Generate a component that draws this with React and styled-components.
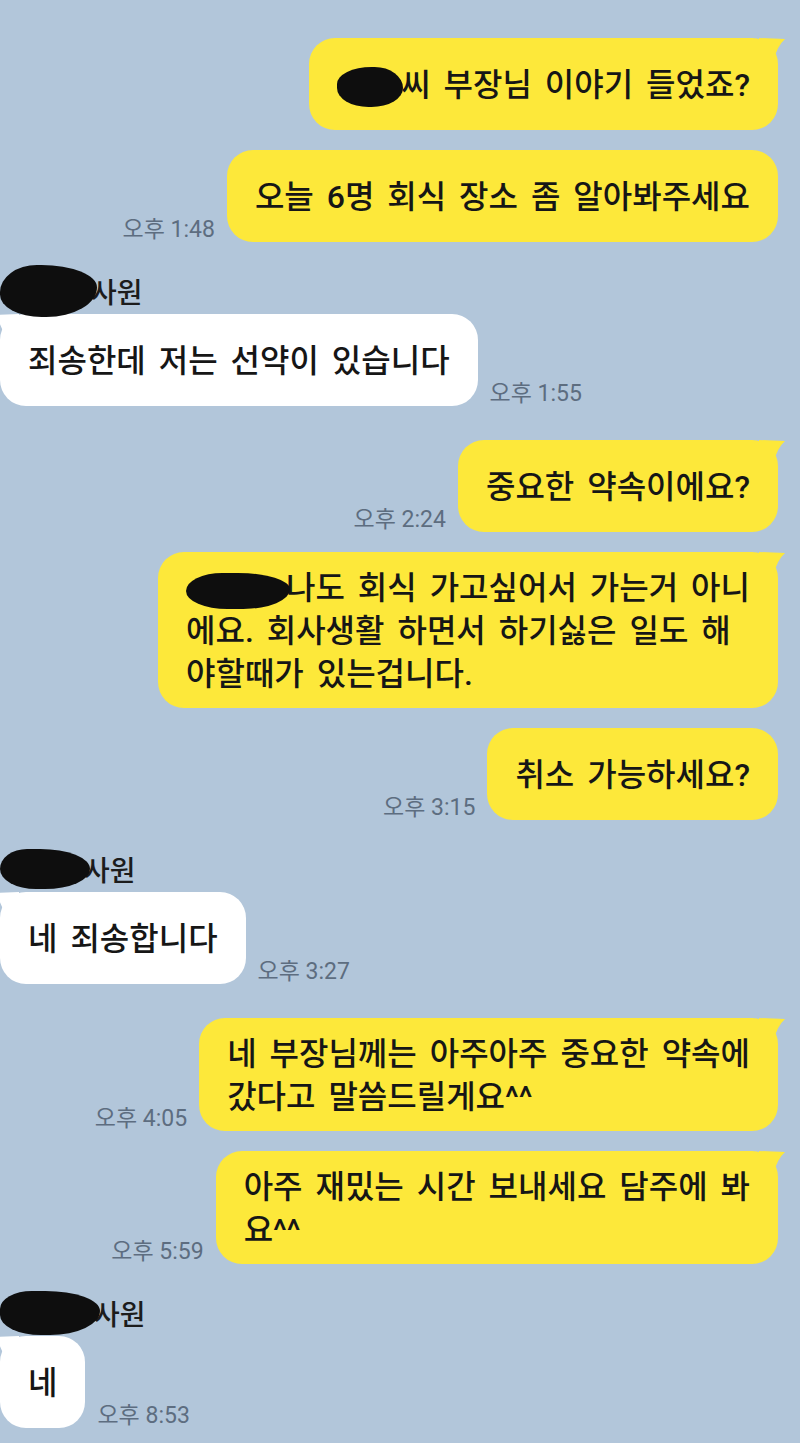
import React from 'react';
import styled, { createGlobalStyle, css } from 'styled-components';

const GlobalStyle = createGlobalStyle`
  html, body {
    margin: 0;
    padding: 0;
    background: #b2c6da;
  }
  body {
    font-family: Roboto, "Noto Sans CJK KR", sans-serif;
  }
`;

const Screen = styled.main`
  width: 800px;
  min-height: 1443px;
  box-sizing: border-box;
  padding: 38px 22px 0 0;
  background: #b2c6da;
  display: flex;
  flex-direction: column;
  gap: 34px;
  overflow: hidden;
  font-family: Roboto, "Noto Sans CJK KR", sans-serif;
`;

const Group = styled.section`
  display: flex;
  flex-direction: column;
  gap: ${(p) => (p.$mine ? '20px' : '8px')};
  align-items: ${(p) => (p.$mine ? 'flex-end' : 'flex-start')};
`;

const Row = styled.div`
  display: flex;
  flex-direction: ${(p) => (p.$mine ? 'row-reverse' : 'row')};
  align-items: flex-end;
  gap: 12px;
`;

const Bubble = styled.div`
  position: relative;
  box-sizing: border-box;
  min-height: 92px;
  display: flex;
  align-items: center;
  padding: 15px 28px 12px;
  border-radius: 26px;
  background: ${(p) => (p.$mine ? '#fde83a' : '#ffffff')};
  color: #161616;
  font-size: 32px;
  font-weight: 500;
  line-height: 43px;
  word-spacing: 5px;
  white-space: nowrap;

  ${(p) =>
    p.$tail &&
    css`
      &::before {
        content: '';
        position: absolute;
        top: 0;
        ${p.$mine ? 'right: -7px;' : 'left: -7px;'}
        width: 26px;
        height: 24px;
        background: inherit;
        clip-path: ${p.$mine
          ? "path('M0 0 L26 1 Q18 8 14 24 L0 24 Z')"
          : "path('M26 0 L0 1 Q8 8 12 24 L26 24 Z')"};
      }
    `}
`;

const Text = styled.span`
  display: block;
`;

const Time = styled.span`
  font-size: 23px;
  line-height: 24px;
  color: #5d6d80;
  white-space: nowrap;
`;

const NameRow = styled.div`
  display: flex;
  align-items: center;
  height: 30px;
  font-size: 28px;
  font-weight: 500;
  color: #1c1c1c;
`;

const Redaction = styled.span`
  position: relative;
  z-index: 1;
  display: inline-block;
  flex: none;
  width: ${(p) => p.$w}px;
  height: ${(p) => p.$h}px;
  margin-right: ${(p) => p.$overlap || 0}px;
  vertical-align: middle;
  background: #0e0e0e;
  border-radius: ${(p) => p.$shape || '50%'};
  filter: blur(0.7px);
`;

const Message = ({ mine, tail, time, children }) => (
  <Row $mine={mine}>
    <Bubble $mine={mine} $tail={tail}>
      <Text>{children}</Text>
    </Bubble>
    {time && <Time>{time}</Time>}
  </Row>
);

const Sender = ({ w, h, shape }) => (
  <NameRow>
    <Redaction $w={w} $h={h} $shape={shape} $overlap={-6} />
    사원
  </NameRow>
);

export default function App() {
  return (
    <>
      <GlobalStyle />
      <Screen>
        <Group $mine>
          <Message mine tail>
            <Redaction $w={66} $h={40} $overlap={-2} $shape="55% 45% 50% 50% / 45% 55% 50% 50%" />
            씨 부장님 이야기 들었죠?
          </Message>
          <Message mine time="오후 1:48">
            오늘 6명 회식 장소 좀 알아봐주세요
          </Message>
        </Group>

        <Group>
          <Sender w={97} h={52} shape="40% 60% 55% 45% / 55% 45% 60% 45%" />
          <Message tail time="오후 1:55">
            죄송한데 저는 선약이 있습니다
          </Message>
        </Group>

        <Group $mine>
          <Message mine tail time="오후 2:24">
            중요한 약속이에요?
          </Message>
          <Message mine tail>
            <Redaction $w={104} $h={36} $overlap={-4} $shape="35% 50% 45% 40% / 50% 45% 55% 50%" />
            나도 회식 가고싶어서 가는거 아니
            <br />
            에요. 회사생활 하면서 하기싫은 일도 해
            <br />
            야할때가 있는겁니다.
          </Message>
          <Message mine time="오후 3:15">
            취소 가능하세요?
          </Message>
        </Group>

        <Group>
          <Sender w={90} h={40} shape="30% 55% 50% 40% / 50% 50% 50% 50%" />
          <Message tail time="오후 3:27">
            네 죄송합니다
          </Message>
        </Group>

        <Group $mine>
          <Message mine tail time="오후 4:05">
            네 부장님께는 아주아주 중요한 약속에
            <br />
            갔다고 말씀드릴게요^^
          </Message>
          <Message mine tail time="오후 5:59">
            아주 재밌는 시간 보내세요 담주에 봐
            <br />
            요^^
          </Message>
        </Group>

        <Group>
          <Sender w={100} h={44} shape="35% 60% 55% 45% / 45% 50% 60% 50%" />
          <Message tail time="오후 8:53">
            네
          </Message>
        </Group>
      </Screen>
    </>
  );
}
